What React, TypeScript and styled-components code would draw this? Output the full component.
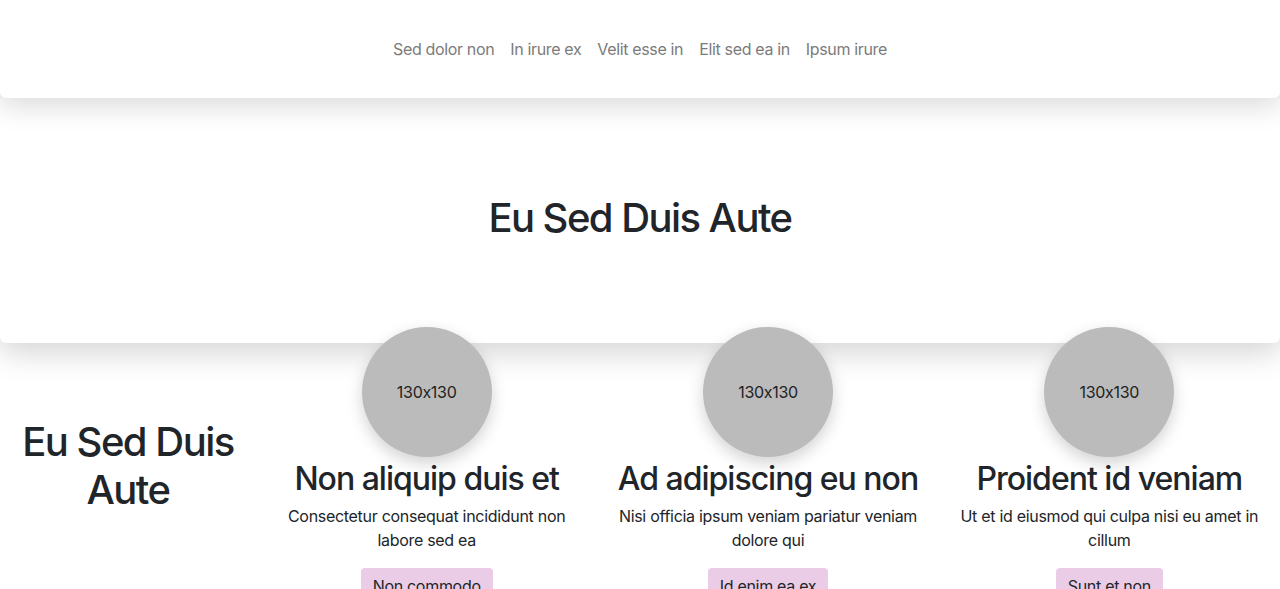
import React from 'react';
import styled, { createGlobalStyle } from 'styled-components';

const GlobalStyle = createGlobalStyle`
  * {
    box-sizing: border-box;
  }
  body {
    margin: 0;
    background: #fff;
    font-family: Inter, "Noto Sans", sans-serif;
    font-feature-settings: "calt" 0;
    color: #212529;
    -webkit-font-smoothing: antialiased;
  }
`;

const links = ['Sed dolor non', 'In irure ex', 'Velit esse in', 'Elit sed ea in', 'Ipsum irure'];

const features = [
  {
    title: 'Non aliquip duis et',
    text: 'Consectetur consequat incididunt non labore sed ea',
    action: 'Non commodo',
  },
  {
    title: 'Ad adipiscing eu non',
    text: 'Nisi officia ipsum veniam pariatur veniam dolore qui',
    action: 'Id enim ea ex',
  },
  {
    title: 'Proident id veniam',
    text: 'Ut et id eiusmod qui culpa nisi eu amet in cillum',
    action: 'Sunt et non',
  },
];

export default function App() {
  return (
    <Page>
      <GlobalStyle />
      <Header>
        <Nav>
          {links.map((l) => (
            <NavLink key={l} href="#">
              {l}
            </NavLink>
          ))}
        </Nav>
      </Header>
      <Hero>
        <HeroTitle>Eu Sed Duis Aute</HeroTitle>
      </Hero>
      <Features>
        <Intro>
          <IntroTitle>Eu Sed Duis Aute</IntroTitle>
        </Intro>
        {features.map((f) => (
          <Feature key={f.title}>
            <Avatar>130x130</Avatar>
            <FeatureTitle>{f.title}</FeatureTitle>
            <FeatureText>{f.text}</FeatureText>
            <ActionButton>{f.action}</ActionButton>
          </Feature>
        ))}
      </Features>
    </Page>
  );
}

const Page = styled.div`
  min-height: 100vh;
  overflow: hidden;
`;

const Header = styled.header`
  position: relative;
  z-index: 3;
  height: 98px;
  display: flex;
  align-items: center;
  justify-content: center;
  background: #fff;
  border-radius: 0 0 6px 6px;
  box-shadow: 0 8px 28px rgba(0, 0, 0, 0.15);
`;

const Nav = styled.nav`
  display: flex;
  align-items: center;
`;

const NavLink = styled.a`
  padding: 8px 8px;
  font-size: 16px;
  line-height: 24px;
  letter-spacing: -0.35px;
  color: #7b7b7b;
  text-decoration: none;
`;

const Hero = styled.section`
  position: relative;
  z-index: 2;
  height: 245px;
  display: flex;
  align-items: center;
  justify-content: center;
  background: #fff;
  border-radius: 0 0 6px 6px;
  box-shadow: 0 10px 30px rgba(0, 0, 0, 0.17);
`;

const HeroTitle = styled.h1`
  margin: 0;
  padding-bottom: 6px;
  font-size: 40px;
  font-weight: 500;
  line-height: 1.2;
  letter-spacing: -1.55px;
`;

const Features = styled.section`
  position: relative;
  z-index: 4;
  display: grid;
  grid-template-columns: 20% repeat(3, 1fr);
  align-items: start;
  margin-top: -16px;
`;

const Intro = styled.div`
  align-self: stretch;
  display: flex;
  align-items: center;
  justify-content: center;
  padding: 0 12px;
`;

const IntroTitle = styled.h2`
  margin: 0;
  font-size: 40px;
  font-weight: 500;
  line-height: 1.2;
  text-align: center;
  letter-spacing: -1.5px;
`;

const Feature = styled.div`
  display: flex;
  flex-direction: column;
  align-items: center;
  padding: 0 12px;
  text-align: center;
`;

const Avatar = styled.div`
  width: 130px;
  height: 130px;
  border-radius: 50%;
  display: flex;
  align-items: center;
  justify-content: center;
  background: #bbbbbb;
  color: #222;
  font-size: 16px;
  letter-spacing: -0.3px;
  box-shadow: 0 6px 16px rgba(0, 0, 0, 0.18);
`;

const FeatureTitle = styled.h3`
  margin: 3px 0 6px;
  font-size: 32px;
  font-weight: 500;
  line-height: 1.2;
  letter-spacing: -1px;
`;

const FeatureText = styled.p`
  margin: 0 0 16px;
  font-size: 16px;
  line-height: 24px;
  letter-spacing: -0.3px;
`;

const ActionButton = styled.button`
  padding: 6px 12px;
  border: none;
  border-radius: 4px;
  background: #ebcce6;
  color: #212529;
  font-family: inherit;
  font-size: 16px;
  line-height: 24px;
  letter-spacing: -0.3px;
  cursor: pointer;
`;
